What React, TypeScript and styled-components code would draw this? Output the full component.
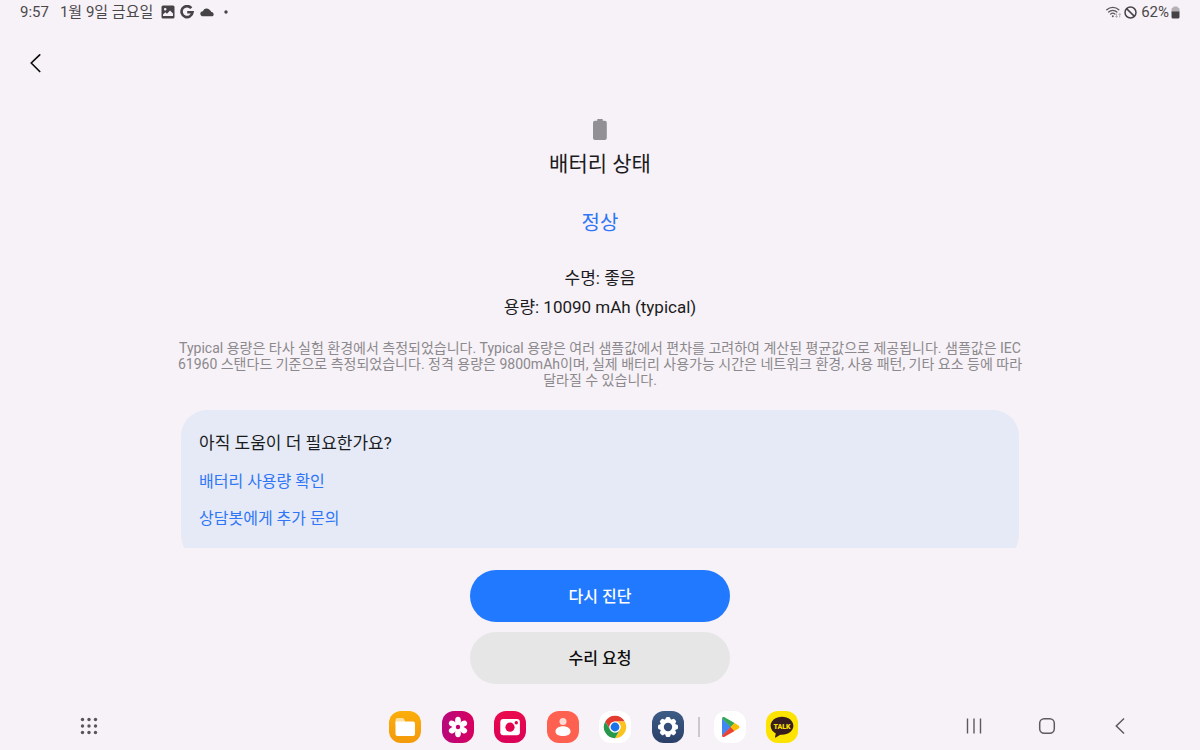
import React from "react";
import styled, { createGlobalStyle } from "styled-components";

const GlobalStyle = createGlobalStyle`
  *, *::before, *::after { box-sizing: border-box; }
  body {
    margin: 0;
    background: #f7f2f7;
    color: #1b1b1d;
    font-family: Roboto, "Noto Sans CJK KR", sans-serif;
  }
  button { font: inherit; border: 0; padding: 0; background: none; color: inherit; cursor: pointer; }
  svg { display: block; }
`;

const Screen = styled.div`
  display: flex;
  flex-direction: column;
  height: 100vh;
`;

const StatusBar = styled.header`
  display: flex;
  align-items: center;
  justify-content: space-between;
  height: 24px;
  flex: none;
  padding: 0 20px;
  font-size: 15px;
  line-height: 24px;
  color: #4b484c;
`;

const StatusGroup = styled.div<{ $gap: number }>`
  display: flex;
  align-items: center;
  gap: ${(p) => p.$gap}px;
`;

const AppBar = styled.div`
  display: flex;
  align-items: center;
  flex: none;
  height: 78px;
  padding: 0 20px;
`;

const BackButton = styled.button`
  display: grid;
  place-items: center;
  width: 32px;
  height: 32px;
`;

const ScrollArea = styled.main`
  flex: 1;
  min-height: 0;
  overflow-y: auto;
  scrollbar-width: none;
  padding: 16px 24px 0;
`;

const Content = styled.div`
  display: flex;
  flex-direction: column;
  align-items: center;
  text-align: center;
`;

const Title = styled.h1`
  margin: 8px 0 0;
  font-size: 21px;
  font-weight: 400;
  line-height: 30px;
`;

const Result = styled.p`
  margin: 29px 0 0;
  font-size: 20px;
  line-height: 30px;
  color: #2f76f6;
`;

const Facts = styled.div`
  margin-top: 26px;
  font-size: 17px;
  line-height: 29px;
`;

const Fact = styled.p`
  margin: 0;
`;

const Note = styled.p`
  max-width: 856px;
  margin: 18px 0 0;
  font-size: 14px;
  line-height: 16px;
  color: #8b898d;
  word-break: keep-all;
`;

const HelpCard = styled.section`
  width: 100%;
  max-width: 838px;
  margin-top: 22px;
  padding: 18px 18px 24px;
  border-radius: 26px;
  background: #e5eaf6;
  text-align: left;
`;

const HelpTitle = styled.h2`
  margin: 0 0 5px;
  font-size: 17px;
  font-weight: 400;
  line-height: 30px;
`;

const HelpLink = styled.a`
  display: block;
  width: fit-content;
  font-size: 16px;
  line-height: 37px;
  color: #2f76f6;
  text-decoration: none;
`;

const Actions = styled.div`
  display: flex;
  flex-direction: column;
  align-items: center;
  flex: none;
  gap: 10px;
  padding: 22px 24px 18px;
`;

const ActionButton = styled.button<{ $primary?: boolean }>`
  && {
    width: 260px;
    height: 52px;
    padding-bottom: 2px;
    border-radius: 26px;
    font-size: 16px;
    font-weight: 500;
    background: ${(p) => (p.$primary ? "#2079ff" : "#e6e6e6")};
    color: ${(p) => (p.$primary ? "#ffffff" : "#0c0c0c")};
  }
`;

const Taskbar = styled.nav`
  display: grid;
  grid-template-columns: 1fr auto 1fr;
  align-items: center;
  flex: none;
  height: 48px;
  padding: 0 64px 0 73px;
`;

const NavButton = styled.button`
  display: grid;
  place-items: center;
  width: 32px;
  height: 32px;
`;

const Dock = styled.div`
  display: flex;
  align-items: center;
  gap: 14px;
  margin-right: 22px;
  padding-top: 2px;
`;

const DockGroup = styled.div<{ $width: number }>`
  display: flex;
  justify-content: space-between;
  width: ${(p) => p.$width}px;
`;

const DockDivider = styled.span`
  width: 2px;
  height: 20px;
  background: #cbc7cb;
`;

const AppButton = styled.button<{ $bg: string }>`
  && {
    width: 32px;
    height: 32px;
    border-radius: 12px;
    background: ${(p) => p.$bg};
  }
`;

const NavKeys = styled.div`
  display: flex;
  justify-content: flex-end;
  gap: 41px;
`;

const PictureIcon = () => (
  <svg width="14" height="14" viewBox="0 0 14 14" aria-hidden="true">
    <path fillRule="evenodd" fill="#464347" d="M2 .5h10A1.500 1.500 0 0 1 13.500 2v10a1.500 1.500 0 0 1-1.500 1.500H2A1.500 1.500 0 0 1 .5 12V2A1.500 1.500 0 0 1 2 .5ZM2 11h10V8.500L9 5.500 6 8.700 4.300 7.200 2 9.500ZM4.200 3a1.300 1.300 0 1 0 0 2.600 1.300 1.300 0 0 0 0-2.600Z" />
  </svg>
);

const GoogleIcon = () => (
  <svg width="14" height="14" viewBox="0 0 14 14" aria-hidden="true">
    <path fill="none" stroke="#464347" strokeWidth="2.600" d="M11.300 3.100A5.500 5.500 0 1 0 12.500 7.300H7.200" />
  </svg>
);

const CloudIcon = () => (
  <svg width="16" height="10" viewBox="0 0 16 10" aria-hidden="true">
    <path fill="#464347" d="M3 9.200A2.500 2.500 0 0 1 2.600 4.600Q3.300 4.300 3.900 4.300A4 4 0 0 1 11 3.300 3.600 3.600 0 0 1 12.300 5.100 2.200 2.200 0 0 1 13.600 9.200Z" />
  </svg>
);

const WifiIcon = () => (
  <svg width="16" height="14" viewBox="0 0 16 14" aria-hidden="true">
    <g fill="none" stroke="#5a575b" strokeWidth="1.300" strokeLinecap="round">
      <path d="M.8 4.800a8.400 8.400 0 0 1 12 0" />
      <path d="M2.700 7a5.800 5.800 0 0 1 8.200 0" />
      <path d="M4.600 9.100a3.200 3.200 0 0 1 4.400 0" />
    </g>
    <circle cx="6.800" cy="11.200" r="1" fill="#5a575b" />
    <path fill="none" stroke="#b5b1b5" strokeWidth="1" d="M10.500 8.500v4m-1.300-1.300 1.300 1.300 1.300-1.300M13.700 12.500v-4m-1.300 1.300 1.300-1.300L15 9.800" />
  </svg>
);

const BlockedIcon = () => (
  <svg width="13" height="13" viewBox="0 0 13 13" aria-hidden="true">
    <g fill="none" stroke="#464347" strokeWidth="1.500">
      <circle cx="6.500" cy="6.500" r="5.500" />
      <path d="m2.600 2.600 7.800 7.800" />
    </g>
  </svg>
);

const ChargeIcon = () => (
  <svg width="9" height="13" viewBox="0 0 9 13" aria-hidden="true">
    <path fill="#b4b0b4" d="M2.500.5h4v1H7A1.500 1.500 0 0 1 8.500 3v3h-8V3A1.500 1.500 0 0 1 2 1.500h.5Z" />
    <path fill="#464347" d="M.5 5.500h8V11A1.500 1.500 0 0 1 7 12.500H2A1.500 1.500 0 0 1 .5 11Z" />
  </svg>
);

const BatteryIcon = () => (
  <svg width="16" height="23" viewBox="0 0 16 23" aria-hidden="true">
    <path fill="#929094" d="M5.300 1h5.400v1.800h2A2 2 0 0 1 14.800 4.800V20a2 2 0 0 1-2 2H3a2 2 0 0 1-2-2V4.800a2 2 0 0 1 2-2h2.300Z" />
  </svg>
);

const BackIcon = () => (
  <svg width="12" height="20" viewBox="0 0 12 20" aria-hidden="true">
    <path fill="none" stroke="#0c0c0c" strokeWidth="1.700" strokeLinecap="round" strokeLinejoin="round" d="M9.700 1.800 1.200 10l8.500 8.500" />
  </svg>
);

const AppsIcon = () => (
  <svg width="18" height="18" viewBox="0 0 18 18" fill="#58555a" aria-hidden="true">
    {[2.5, 9, 15.5].map((y) => [2.5, 9, 15.5].map((x) => <circle key={`${x}-${y}`} cx={x} cy={y} r="1.700" />))}
  </svg>
);

const RecentsIcon = () => (
  <svg width="18" height="18" viewBox="0 0 18 18" aria-hidden="true">
    <path stroke="#5d5a5e" strokeWidth="1.400" d="M2.500 1.500v15M9 1.500v15M15.500 1.500v15" />
  </svg>
);

const HomeIcon = () => (
  <svg width="18" height="18" viewBox="0 0 18 18" aria-hidden="true">
    <rect x="1.700" y="1.700" width="14.600" height="14.600" rx="4.500" fill="none" stroke="#5d5a5e" strokeWidth="1.500" />
  </svg>
);

const NavBackIcon = () => (
  <svg width="18" height="18" viewBox="0 0 18 18" aria-hidden="true">
    <path fill="none" stroke="#5d5a5e" strokeWidth="1.500" d="M13 1.500 5.300 9l7.700 7.500" />
  </svg>
);

const FilesArt = () => (
  <svg width="32" height="32" viewBox="0 0 32 32" aria-hidden="true">
    <path fill="#ffdf9e" d="M6.500 9a2 2 0 0 1 2-2h4.700a2 2 0 0 1 1.600.8L16 9.500V14H6.500Z" />
    <path fill="#fff" d="M6.500 10.500H24a2 2 0 0 1 2 2V23a2 2 0 0 1-2 2H8.500a2 2 0 0 1-2-2Z" />
  </svg>
);

const GalleryArt = () => (
  <svg width="32" height="32" viewBox="0 0 32 32" aria-hidden="true">
    {[0, 60, 120, 180, 240, 300].map((a) => (
      <ellipse key={a} cx="16" cy="9.700" rx="2.900" ry="3.900" fill="#fff" transform={`rotate(${a} 16 16)`} />
    ))}
    <circle cx="16" cy="16" r="4" fill="#fff" />
    <circle cx="16" cy="16" r="2.200" fill="#c4006f" />
  </svg>
);

const CameraArt = () => (
  <svg width="32" height="32" viewBox="0 0 32 32" aria-hidden="true">
    <rect x="6.300" y="8" width="19.600" height="16.200" rx="3" fill="#fff" />
    <circle cx="16" cy="16.200" r="4.600" fill="#e2044f" />
    <circle cx="22.300" cy="11.800" r="1.700" fill="#e2044f" />
  </svg>
);

const ContactsArt = () => (
  <svg width="32" height="32" viewBox="0 0 32 32" aria-hidden="true">
    <circle cx="16" cy="10.500" r="3.500" fill="#ffd9d2" />
    <path fill="#fff" d="M8.500 20.500c0-3 3.200-5.200 7.500-5.200s7.500 2.200 7.500 5.200S20.300 25 16 25s-7.500-1.500-7.500-4.500Z" />
  </svg>
);

const ChromeArt = () => (
  <svg width="32" height="32" viewBox="-16 -16 32 32" aria-hidden="true">
    <path fill="#e33b2e" d="M-9.700-5.600A11.200 11.200 0 0 1 9.700-5.600H0A5.600 5.600 0 0 0-4.850 2.800Z" />
    <path fill="#fcc31e" d="M9.700-5.600A11.200 11.200 0 0 1 0 11.200L4.850 2.800A5.600 5.600 0 0 0 0-5.600Z" />
    <path fill="#27984a" d="M0 11.200A11.200 11.200 0 0 1-9.700-5.600L-4.850 2.800A5.600 5.600 0 0 0 4.850 2.800Z" />
    <circle r="5.600" fill="#fff" />
    <circle r="4.400" fill="#1a73e8" />
  </svg>
);

const SettingsArt = () => (
  <svg width="32" height="32" viewBox="-16 -16 32 32" aria-hidden="true">
    {[0, 45, 90, 135, 180, 225, 270, 315].map((a) => (
      <rect key={a} x="-2.400" y="-10" width="4.800" height="5" rx="1.600" fill="#fff" transform={`rotate(${a})`} />
    ))}
    <circle r="6.200" fill="none" stroke="#fff" strokeWidth="4" />
  </svg>
);

const PlayArt = () => (
  <svg width="32" height="32" viewBox="0 0 32 32" aria-hidden="true">
    <path fill="#4285f4" d="M8 7.500v17.300l9-8.800Z" />
    <path fill="#34a853" d="M8 7.500c0-1.500 1.400-2 2.600-1.300l10 5.800-3.800 4.200Z" />
    <path fill="#ea4335" d="M8 24.500c0 1.500 1.400 2 2.600 1.300l10-5.800-3.800-4.200Z" />
    <path fill="#fbbc04" d="m20.400 11.900 4.100 2.500c1.200.7 1.200 2.400 0 3.100l-4.100 2.600-3.900-4.100Z" />
  </svg>
);

const TalkLabel = styled.text`
  font-family: Roboto, sans-serif;
  font-size: 7px;
  font-weight: 900;
`;

const TalkArt = () => (
  <svg width="32" height="32" viewBox="0 0 32 32" aria-hidden="true">
    <path fill="#371d1e" d="M16 5.800c6.300 0 11.400 3.900 11.400 9s-5.100 9-11.400 9l-1.700-.1-4.600 2.900c-.5.300-.8 0-.7-.5l.8-3.700c-3.100-1.600-5.200-4.400-5.200-7.600 0-5.100 5.100-9 11.400-9Z" />
    <TalkLabel x="16" y="17.500" textAnchor="middle" fill="#fae100">TALK</TalkLabel>
  </svg>
);

export default function App() {
  return (
    <Screen>
      <GlobalStyle />
      <StatusBar>
        <StatusGroup $gap={8}>
          <StatusGroup $gap={11}>
            <span>9:57</span>
            <span>1월 9일 금요일</span>
          </StatusGroup>
          <StatusGroup $gap={5}>
            <PictureIcon />
            <GoogleIcon />
            <CloudIcon />
            <svg width="14" height="4" viewBox="0 0 14 4" aria-hidden="true">
              <circle cx="6" cy="2" r="1.700" fill="#464347" />
            </svg>
          </StatusGroup>
        </StatusGroup>
        <StatusGroup $gap={4}>
          <StatusGroup $gap={2}>
            <WifiIcon />
            <BlockedIcon />
          </StatusGroup>
          <StatusGroup $gap={2}>
            <span>62%</span>
            <ChargeIcon />
          </StatusGroup>
        </StatusGroup>
      </StatusBar>

      <AppBar>
        <BackButton aria-label="뒤로">
          <BackIcon />
        </BackButton>
      </AppBar>

      <ScrollArea>
        <Content>
          <BatteryIcon />
          <Title>배터리 상태</Title>
          <Result>정상</Result>
          <Facts>
            <Fact>수명: 좋음</Fact>
            <Fact>용량: 10090 mAh (typical)</Fact>
          </Facts>
          <Note>
            Typical 용량은 타사 실험 환경에서 측정되었습니다. Typical 용량은 여러 샘플값에서 편차를 고려하여 계산된
            평균값으로 제공됩니다. 샘플값은 IEC 61960 스탠다드 기준으로 측정되었습니다. 정격 용량은 9800mAh이며, 실제
            배터리 사용가능 시간은 네트워크 환경, 사용 패턴, 기타 요소 등에 따라 달라질 수 있습니다.
          </Note>
          <HelpCard>
            <HelpTitle>아직 도움이 더 필요한가요?</HelpTitle>
            <HelpLink href="#usage">배터리 사용량 확인</HelpLink>
            <HelpLink href="#chatbot">상담봇에게 추가 문의</HelpLink>
          </HelpCard>
        </Content>
      </ScrollArea>

      <Actions>
        <ActionButton $primary>다시 진단</ActionButton>
        <ActionButton>수리 요청</ActionButton>
      </Actions>

      <Taskbar>
        <NavButton aria-label="앱 목록">
          <AppsIcon />
        </NavButton>
        <Dock>
          <DockGroup $width={295}>
            <AppButton $bg="linear-gradient(#fbae0a, #f39a0b)" aria-label="내 파일"><FilesArt /></AppButton>
            <AppButton $bg="linear-gradient(90deg, #b8077c, #d8005f)" aria-label="갤러리"><GalleryArt /></AppButton>
            <AppButton $bg="linear-gradient(#ea0a4c, #dc0058)" aria-label="카메라"><CameraArt /></AppButton>
            <AppButton $bg="#ff6150" aria-label="연락처"><ContactsArt /></AppButton>
            <AppButton $bg="#ffffff" aria-label="Chrome"><ChromeArt /></AppButton>
            <AppButton $bg="linear-gradient(#3b5c86, #2b4069)" aria-label="설정"><SettingsArt /></AppButton>
          </DockGroup>
          <DockDivider />
          <DockGroup $width={84}>
            <AppButton $bg="#ffffff" aria-label="Play 스토어"><PlayArt /></AppButton>
            <AppButton $bg="#fce300" aria-label="카카오톡"><TalkArt /></AppButton>
          </DockGroup>
        </Dock>
        <NavKeys>
          <NavButton aria-label="최근 앱"><RecentsIcon /></NavButton>
          <NavButton aria-label="홈"><HomeIcon /></NavButton>
          <NavButton aria-label="뒤로 가기"><NavBackIcon /></NavButton>
        </NavKeys>
      </Taskbar>
    </Screen>
  );
}
